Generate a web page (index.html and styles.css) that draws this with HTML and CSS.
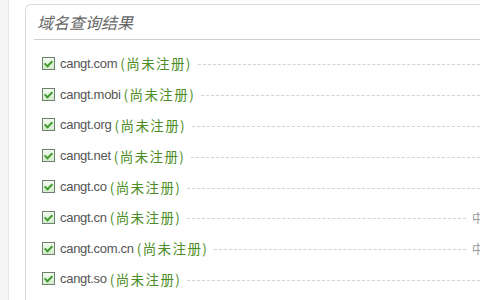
FILE: index.html
```html
<!DOCTYPE html>
<html lang="zh-CN">
<head>
  <meta charset="UTF-8">
  <title>域名查询结果</title>
  <link rel="stylesheet" href="styles.css">
</head>
<body>

<div class="page">
  <div class="side"></div>
  <div class="result-box">
    <h3 class="box-title">域名查询结果</h3>
    <ul class="domain-list">
      <li class="domain"><span class="check"></span><span class="name">cangt.com</span><span class="state">(尚未注册)</span><span class="dots"></span></li>
      <li class="domain"><span class="check"></span><span class="name">cangt.mobi</span><span class="state">(尚未注册)</span><span class="dots"></span></li>
      <li class="domain"><span class="check"></span><span class="name">cangt.org</span><span class="state">(尚未注册)</span><span class="dots"></span></li>
      <li class="domain"><span class="check"></span><span class="name">cangt.net</span><span class="state">(尚未注册)</span><span class="dots"></span></li>
      <li class="domain"><span class="check"></span><span class="name">cangt.co</span><span class="state">(尚未注册)</span><span class="dots"></span></li>
      <li class="domain"><span class="check"></span><span class="name">cangt.cn</span><span class="state">(尚未注册)</span><span class="dots short"></span><span class="extra">中</span></li>
      <li class="domain"><span class="check"></span><span class="name">cangt.com.cn</span><span class="state">(尚未注册)</span><span class="dots short"></span><span class="extra">中</span></li>
      <li class="domain"><span class="check"></span><span class="name">cangt.so</span><span class="state">(尚未注册)</span><span class="dots"></span></li>
    </ul>
  </div>
</div>

</body>
</html>
```

FILE: styles.css
```css
body {
  margin: 0;
  background: #fff;
  font-family: "Liberation Sans", "Noto Sans CJK SC", sans-serif;
  overflow: hidden;
}

.page {
  display: flex;
  height: 300px;
}

.side {
  width: 8px;
  background: #f5f5f5;
  border-right: 1px solid #e6e6e6;
  margin-right: 16px;
}

.result-box {
  flex: 1;
  margin-top: 4px;
  border: 1px solid #dcdcdc;
  border-right: none;
  border-bottom: none;
  border-radius: 6px 0 0 0;
  padding-left: 8px;
}

.box-title {
  margin: 0;
  padding: 5px 0 0 3px;
  height: 29px;
  font-family: "Noto Sans CJK SC", sans-serif;
  font-size: 16px;
  font-weight: normal;
  font-style: italic;
  color: #666;
  border-bottom: 1px solid #cfcfcf;
}

.domain-list {
  list-style: none;
  margin: 0;
  padding: 8px 0 0 8px;
}

.domain {
  display: flex;
  align-items: center;
  height: 30.8px;
  font-size: 13px;
  color: #555;
}

.check {
  width: 11px;
  height: 11px;
  border: 1px solid #6f7f6f;
  background: linear-gradient(#f2fbef, #d3eccb);
  margin-right: 5px;
  position: relative;
}

.check::after {
  content: "";
  position: absolute;
  left: 3px;
  top: 1px;
  width: 3px;
  height: 6px;
  border: solid #3e9a2a;
  border-width: 0 2px 2px 0;
  transform: rotate(45deg);
}

.name {
  letter-spacing: -0.3px;
}

.state {
  font-family: "Noto Sans CJK SC", sans-serif;
  font-size: 13.5px;
  letter-spacing: 1.4px;
  color: #4b8d24;
  margin-left: 3px;
}

.dots {
  flex: 1;
  border-top: 1px dashed #d2d2d2;
  margin: 3px 0 0 6px;
}

.dots.short {
  margin-right: 6px;
}

.extra {
  font-family: "Noto Sans CJK SC", sans-serif;
  font-size: 12px;
  color: #999;
  width: 8px;
  overflow: hidden;
}
```
